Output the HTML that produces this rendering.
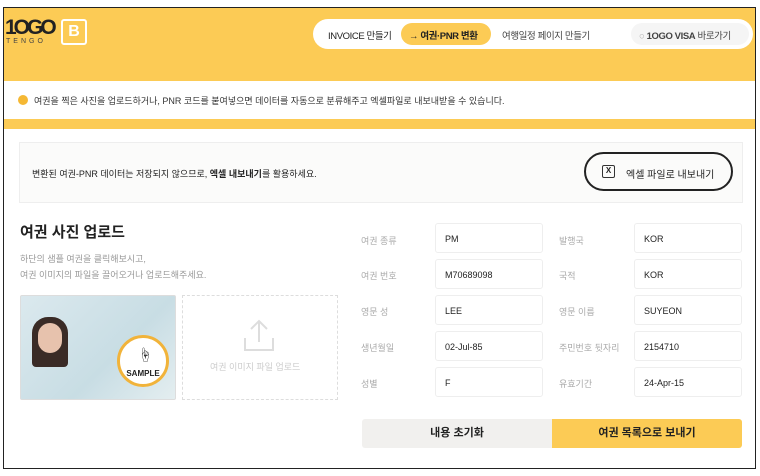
<!DOCTYPE html>
<html><head><meta charset="utf-8"><style>
*{margin:0;padding:0;box-sizing:border-box}
body{width:760px;height:476px;background:#fff;font-family:"Liberation Sans","Noto Sans CJK KR",sans-serif;position:relative;overflow:hidden;color:#222}
.frame{position:absolute;left:3px;top:7px;width:753px;height:462px;border:1.5px solid #222;overflow:hidden;background:#fff}
.yb{position:absolute;left:0;top:0;width:100%;height:121px;background:#fccb55}
.ab{position:absolute}
.nav{position:absolute;left:309px;top:11px;width:440px;height:30px;background:#fff;border-radius:15px;font-size:9.5px;letter-spacing:-0.4px}
.nav span{position:absolute;top:9px}
.notice{position:absolute;left:0;top:73px;width:100%;height:38px;background:#fff;font-size:9px;color:#333}
.inp{position:absolute;width:108px;height:30px;border:1px solid #eee;border-radius:3px;font-size:9px;padding:10px 0 0 9px;color:#222}
.lb{position:absolute;font-size:9px;color:#aaa}
</style></head><body>
<div class="frame">
<div class="yb"></div>
<div class="ab" style="left:1px;top:8px;font-size:21px;font-weight:bold;letter-spacing:-3px;color:#222">1OGO</div>
<div class="ab" style="left:2px;top:30px;font-size:7px;letter-spacing:3px;color:#444">TENGO</div>
<div class="ab" style="left:57px;top:11px;width:26px;height:26px;border:2px solid #fff;border-radius:3px;color:#fff;font-weight:bold;font-size:16px;text-align:center;line-height:22px">B</div>
<div class="nav">
<span style="left:15px">INVOICE 만들기</span>
<div class="ab" style="left:88px;top:4px;width:90px;height:22px;background:#fccb55;border-radius:11px"></div>
<span style="left:96px;font-weight:bold">→ 여권·PNR 변환</span>
<span style="left:189px;color:#444">여행일정 페이지 만들기</span>
<div class="ab" style="left:318px;top:4px;width:118px;height:22px;background:#f5f5f5;border-radius:11px"></div>
<span style="left:326px;color:#444"><b style="color:#aaa">○</b> <b>1OGO VISA</b> 바로가기</span>
</div>
<div class="notice"><span class="ab" style="left:14px;top:14px;width:10px;height:10px;border-radius:50%;background:#f5b834"></span><span class="ab" style="left:30px;top:13px">여권을 찍은 사진을 업로드하거나, PNR 코드를 붙여넣으면 데이터를 자동으로 분류해주고 엑셀파일로 내보내받을 수 있습니다.</span></div>
<div class="ab" style="left:15px;top:134px;width:724px;height:61px;background:#fbfbfa;border:1px solid #eee"></div>
<div class="ab" style="left:28px;top:159px;font-size:9px">변환된 여권-PNR 데이터는 저장되지 않으므로, <b>엑셀 내보내기</b>를 활용하세요.</div>
<div class="ab" style="left:580px;top:144px;width:149px;height:39px;border:2px solid #222;border-radius:20px;font-size:10px;padding:12px 0 0 40px">엑셀 파일로 내보내기</div>
<div class="ab" style="left:598px;top:157px;width:13px;height:13px;border:1.5px solid #333;border-radius:2px;font-size:8px;font-weight:bold;text-align:center;line-height:10px">X</div>
<div class="ab" style="left:16px;top:213px;font-size:15px;font-weight:bold">여권 사진 업로드</div>
<div class="ab" style="left:16px;top:243px;font-size:9px;color:#999;line-height:16px">하단의 샘플 여권을 클릭해보시고,<br>여권 이미지의 파일을 끌어오거나 업로드해주세요.</div>
<div class="ab" style="left:16px;top:287px;width:156px;height:105px;background:linear-gradient(135deg,#dbe9ee,#c8dde4 60%,#e4eef0);border:1px solid #ddd;border-radius:2px"></div>
<div class="ab" style="left:28px;top:309px;width:36px;height:50px;background:#3a2b26;border-radius:16px 16px 4px 4px"></div>
<div class="ab" style="left:34px;top:315px;width:24px;height:30px;background:#e7c2ad;border-radius:12px"></div>
<div class="ab" style="left:113px;top:327px;width:52px;height:52px;border-radius:50%;background:#fff;border:3px solid #f1b33a;font-size:8px;font-weight:bold;text-align:center;padding-top:31px">SAMPLE</div>
<div class="ab" style="left:134px;top:337px;font-size:14px">☝</div>
<div class="ab" style="left:178px;top:287px;width:156px;height:105px;border:1px dashed #ddd"></div>
<svg class="ab" style="left:237px;top:310px" width="36" height="36" viewBox="0 0 36 36" fill="none" stroke="#ddd" stroke-width="2"><path d="M18 24V3M10 11l8-8 8 8M4 20v12h28V20"/></svg>
<div class="ab" style="left:206px;top:352px;font-size:9px;color:#ccc">여권 이미지 파일 업로드</div>

<div class="lb" style="left:357px;top:226px">여권 종류</div><div class="inp" style="left:431px;top:215px">PM</div>
<div class="lb" style="left:555px;top:226px">발행국</div><div class="inp" style="left:630px;top:215px">KOR</div>
<div class="lb" style="left:357px;top:261px">여권 번호</div><div class="inp" style="left:431px;top:251px">M70689098</div>
<div class="lb" style="left:555px;top:261px">국적</div><div class="inp" style="left:630px;top:251px">KOR</div>
<div class="lb" style="left:357px;top:297px">영문 성</div><div class="inp" style="left:431px;top:287px">LEE</div>
<div class="lb" style="left:555px;top:297px">영문 이름</div><div class="inp" style="left:630px;top:287px">SUYEON</div>
<div class="lb" style="left:357px;top:333px">생년월일</div><div class="inp" style="left:431px;top:323px">02-Jul-85</div>
<div class="lb" style="left:555px;top:333px">주민번호 뒷자리</div><div class="inp" style="left:630px;top:323px">2154710</div>
<div class="lb" style="left:357px;top:369px">성별</div><div class="inp" style="left:431px;top:359px">F</div>
<div class="lb" style="left:555px;top:369px">유효기간</div><div class="inp" style="left:630px;top:359px">24-Apr-15</div>

<div class="ab" style="left:358px;top:411px;width:190px;height:29px;background:#f1f0ee;border-radius:3px 0 0 3px;font-size:11px;font-weight:bold;text-align:center;line-height:29px">내용 초기화</div>
<div class="ab" style="left:548px;top:411px;width:190px;height:29px;background:#fccb55;border-radius:0 3px 3px 0;font-size:11px;font-weight:bold;text-align:center;line-height:29px">여권 목록으로 보내기</div>
</div>
</body></html>
